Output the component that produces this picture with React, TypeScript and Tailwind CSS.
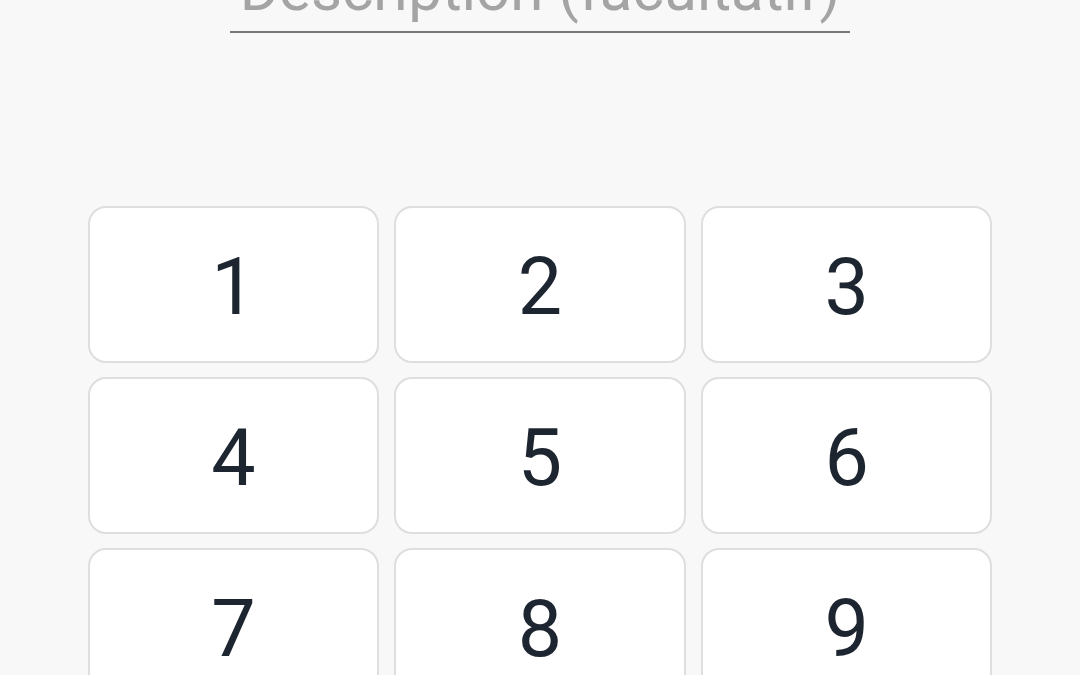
import React from 'react';

const keys = ['1', '2', '3', '4', '5', '6', '7', '8', '9'];

const KeyButton: React.FC<{ label: string }> = ({ label }) => (
  <button className="h-[157px] rounded-[18px] border-2 border-[#dedede] bg-white text-[79px] leading-none text-[#1d2530] flex items-center justify-center">
    <span className="pt-[6px]">{label}</span>
  </button>
);

export default function App() {
  return (
    <div className="h-[675px] overflow-hidden bg-[#f8f8f8] font-['Roboto',sans-serif]">
      <div className="mx-auto w-[620px] -mt-[40px] border-b-2 border-[#777777] pb-[11px] text-center">
        <div className="text-[60px] leading-none text-[#a4a4a4]">Description (facultatif)</div>
      </div>
      <div className="mx-auto mt-[173px] grid w-[905px] grid-cols-3 gap-x-[15px] gap-y-[14px]">
        {keys.map((k) => (
          <KeyButton key={k} label={k} />
        ))}
      </div>
    </div>
  );
}
